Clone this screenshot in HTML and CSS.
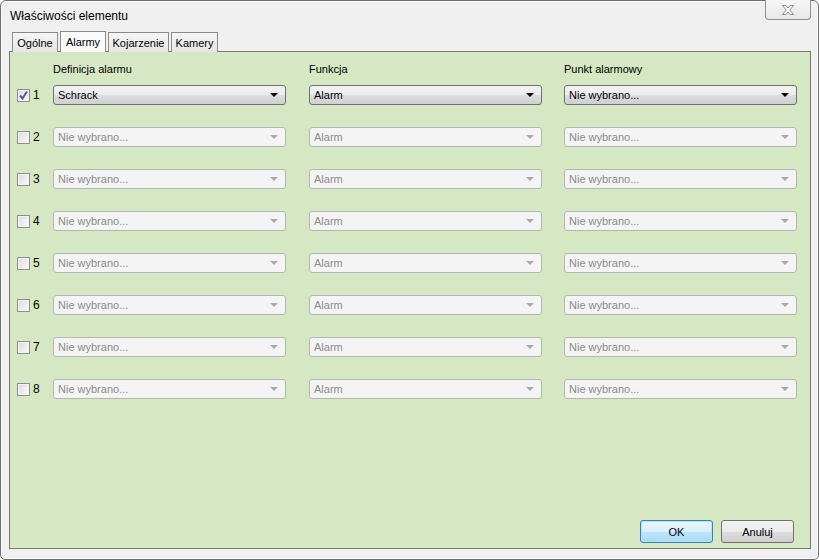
FILE: index.html
```html
<!DOCTYPE html>
<html lang="pl">
<head>
<meta charset="utf-8">
<title>Właściwości elementu</title>
<link rel="stylesheet" href="styles.css">
</head>
<body>
<div class="window">
  <div class="titlebar">
    <span class="title">Właściwości elementu</span>
    <span class="close">
      <svg width="16" height="12" viewBox="0 0 16 12"><path d="M2.5 1.5 H6 L8 4 L10 1.5 H13.5 L9.8 6 L13.5 10.5 H10 L8 8 L6 10.5 H2.5 L6.2 6 Z" fill="#fdfdfd" stroke="#8c8c8c" stroke-width="1" stroke-linejoin="round"/></svg>
    </span>
  </div>
  <div class="tabs">
    <span class="tab t-ogolne">Ogólne</span>
    <span class="tab t-alarmy active">Alarmy</span>
    <span class="tab t-koj">Kojarzenie</span>
    <span class="tab t-kam">Kamery</span>
  </div>
  <div class="panel">
    <div class="grid heads">
      <span></span>
      <span class="head">Definicja alarmu</span>
      <span class="head">Funkcja</span>
      <span class="head">Punkt alarmowy</span>
    </div>
    <div class="grid rows">
      <label class="num"><span class="cb"><svg width="11" height="11" viewBox="0 0 11 11"><path d="M2 5.5 L4.5 8.5 L9 1.5" fill="none" stroke="#4a5fa8" stroke-width="2"/></svg></span>1</label>
      <div class="combo"><span>Schrack</span><i class="arrow"></i></div>
      <div class="combo"><span>Alarm</span><i class="arrow"></i></div>
      <div class="combo"><span>Nie wybrano...</span><i class="arrow"></i></div>

      <label class="num"><span class="cb"></span>2</label>
      <div class="combo off"><span>Nie wybrano...</span><i class="arrow"></i></div>
      <div class="combo off"><span>Alarm</span><i class="arrow"></i></div>
      <div class="combo off"><span>Nie wybrano...</span><i class="arrow"></i></div>

      <label class="num"><span class="cb"></span>3</label>
      <div class="combo off"><span>Nie wybrano...</span><i class="arrow"></i></div>
      <div class="combo off"><span>Alarm</span><i class="arrow"></i></div>
      <div class="combo off"><span>Nie wybrano...</span><i class="arrow"></i></div>

      <label class="num"><span class="cb"></span>4</label>
      <div class="combo off"><span>Nie wybrano...</span><i class="arrow"></i></div>
      <div class="combo off"><span>Alarm</span><i class="arrow"></i></div>
      <div class="combo off"><span>Nie wybrano...</span><i class="arrow"></i></div>

      <label class="num"><span class="cb"></span>5</label>
      <div class="combo off"><span>Nie wybrano...</span><i class="arrow"></i></div>
      <div class="combo off"><span>Alarm</span><i class="arrow"></i></div>
      <div class="combo off"><span>Nie wybrano...</span><i class="arrow"></i></div>

      <label class="num"><span class="cb"></span>6</label>
      <div class="combo off"><span>Nie wybrano...</span><i class="arrow"></i></div>
      <div class="combo off"><span>Alarm</span><i class="arrow"></i></div>
      <div class="combo off"><span>Nie wybrano...</span><i class="arrow"></i></div>

      <label class="num"><span class="cb"></span>7</label>
      <div class="combo off"><span>Nie wybrano...</span><i class="arrow"></i></div>
      <div class="combo off"><span>Alarm</span><i class="arrow"></i></div>
      <div class="combo off"><span>Nie wybrano...</span><i class="arrow"></i></div>

      <label class="num"><span class="cb"></span>8</label>
      <div class="combo off"><span>Nie wybrano...</span><i class="arrow"></i></div>
      <div class="combo off"><span>Alarm</span><i class="arrow"></i></div>
      <div class="combo off"><span>Nie wybrano...</span><i class="arrow"></i></div>
    </div>
    <div class="buttons">
      <button class="btn ok">OK</button>
      <button class="btn">Anuluj</button>
    </div>
  </div>
</div>
</body>
</html>
```
FILE: styles.css
```css
* { box-sizing: border-box; }
html, body { margin: 0; padding: 0; }
body {
  width: 819px;
  height: 560px;
  font-family: "Liberation Sans", Arial, sans-serif;
  font-size: 11px;
  color: #000;
  background: #fff;
}
.window {
  width: 819px;
  height: 560px;
  border: 1px solid #6f6f6f;
  border-radius: 6px 6px 5px 5px;
  background: #f0f0f0;
  display: flex;
  flex-direction: column;
  box-shadow: inset 0 0 0 1px #fbfbfb;
}
.titlebar {
  height: 30px;
  display: flex;
  justify-content: space-between;
  align-items: flex-start;
  padding: 0 7px 0 9px;
}
.title {
  font-size: 12px;
  margin-top: 8px;
  color: #000;
}
.close {
  width: 46px;
  height: 20px;
  margin-top: -1px;
  border: 1px solid #8e8e8e;
  border-top: none;
  border-radius: 0 0 4px 4px;
  background: linear-gradient(#f6f6f6, #e8e8e8);
  display: flex;
  align-items: center;
  justify-content: center;
}
.tabs {
  display: flex;
  gap: 2px;
  padding-left: 11px;
  height: 21px;
  align-items: flex-end;
  position: relative;
  z-index: 1;
  margin-bottom: -1px;
}
.tab {
  height: 20px;
  border: 1px solid #8a8a8a;
  border-bottom: none;
  background: linear-gradient(#f6f6f6, #e6e6e6);
  display: flex;
  align-items: center;
  justify-content: center;
  font-size: 11px;
}
.t-ogolne { width: 46px; }
.t-alarmy { width: 46px; }
.t-koj { width: 61px; }
.t-kam { width: 47px; }
.tab.active {
  height: 21px;
  background: #fafafa;
}
.panel {
  flex: 1;
  margin: 0 7px 10px 8px;
  border: 1px solid #7a7a7a;
  background: #d5e8c3;
  display: flex;
  flex-direction: column;
  padding: 10px 16px 5px 7px;
}
.grid {
  display: grid;
  grid-template-columns: 36px 256px 255px 233px;
  align-items: center;
}
.heads {
  height: 14px;
  margin-bottom: 9px;
}
.head { font-size: 11px; line-height: 14px; color: #000; }
.rows {
  grid-auto-rows: 20px;
  row-gap: 22px;
}
.num {
  display: flex;
  align-items: center;
  gap: 3px;
  font-size: 12px;
  white-space: nowrap;
}
.cb {
  flex: none;
  width: 13px;
  height: 13px;
  border: 1px solid #8f8f8f;
  background: linear-gradient(135deg, #dcdcdc, #fbfbfb);
  box-shadow: inset 0 0 0 1px #f4f4f4;
  display: flex;
  align-items: center;
  justify-content: center;
}
.combo {
  width: 233px;
  height: 20px;
  border: 1px solid #707070;
  border-radius: 3px;
  background: linear-gradient(#f3f3f3 0%, #ebebeb 50%, #dddddd 51%, #cfcfcf 100%);
  display: flex;
  align-items: center;
  justify-content: space-between;
  padding: 0 7px 0 4px;
  font-size: 11px;
}
.arrow {
  width: 0;
  height: 0;
  border-left: 4px solid transparent;
  border-right: 4px solid transparent;
  border-top: 4px solid #000;
}
.combo.off {
  border-color: #b5b5b5;
  background: #f4f4f4;
  color: #8b8b8b;
}
.combo.off .arrow { border-top-color: #a9a9a9; }
.buttons {
  margin-top: auto;
  display: flex;
  justify-content: flex-end;
  gap: 8px;
}
.btn {
  width: 73px;
  height: 23px;
  font-family: "Liberation Sans", Arial, sans-serif;
  font-size: 11px;
  color: #000;
  border: 1px solid #707070;
  border-radius: 3px;
  background: linear-gradient(#f2f2f2 0%, #ebebeb 50%, #dddddd 51%, #cfcfcf 100%);
  padding: 0;
}
.btn.ok {
  border-color: #3c7fb1;
  background: linear-gradient(#eaf6fd 0%, #d9f0fc 50%, #bee6fd 51%, #a7d9f5 100%);
  box-shadow: inset 0 0 0 1px #b2e5fb;
}
```
